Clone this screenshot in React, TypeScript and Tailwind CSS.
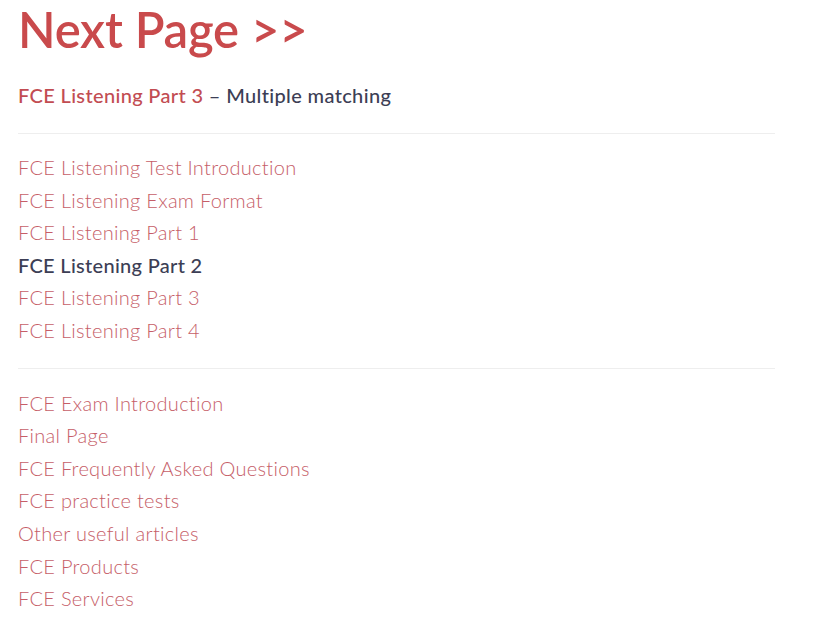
import React from "react";

const groupOne = [
  { label: "FCE Listening Test Introduction" },
  { label: "FCE Listening Exam Format" },
  { label: "FCE Listening Part 1" },
  { label: "FCE Listening Part 2", current: true },
  { label: "FCE Listening Part 3" },
  { label: "FCE Listening Part 4" },
];

const groupTwo = [
  "FCE Exam Introduction",
  "Final Page",
  "FCE Frequently Asked Questions",
  "FCE practice tests",
  "Other useful articles",
  "FCE Products",
  "FCE Services",
];

export default function App() {
  return (
    <div className="min-h-[620px] bg-white font-['Lato',sans-serif] px-[18px] pt-[1px]">
      {/* Pagination heading */}
      <h1 className="text-[49px] leading-[56px] font-semibold tracking-[-0.2px] text-[#c94a4c]">
        <a href="#">Next Page &gt;&gt;</a>
      </h1>

      <p className="mt-[24px] text-[20px] leading-[28px] font-medium tracking-[0.35px] text-[#3c3e55]">
        <a href="#" className="text-[#c24c52]">FCE Listening Part 3</a> – Multiple matching
      </p>

      <div className="mt-[24px] w-[757px] border-t border-[#eeeeee]" />

      {/* Listening section */}
      <ul className="pt-[17px] pb-[21px]">
        {groupOne.map((item) => (
          <li
            key={item.label}
            className={`text-[20px] leading-[32.6px] tracking-[0.3px] ${
              item.current ? "font-medium text-[#3c3e55]" : "font-light text-[#c65e68]"
            }`}
          >
            {item.current ? item.label : <a href="#">{item.label}</a>}
          </li>
        ))}
      </ul>

      <div className="w-[757px] border-t border-[#eeeeee]" />

      {/* Exam links */}
      <ul className="pt-[18px]">
        {groupTwo.map((label) => (
          <li key={label} className="text-[20px] leading-[32.6px] font-light tracking-[0.3px] text-[#c65e68]">
            <a href="#">{label}</a>
          </li>
        ))}
      </ul>
    </div>
  );
}
